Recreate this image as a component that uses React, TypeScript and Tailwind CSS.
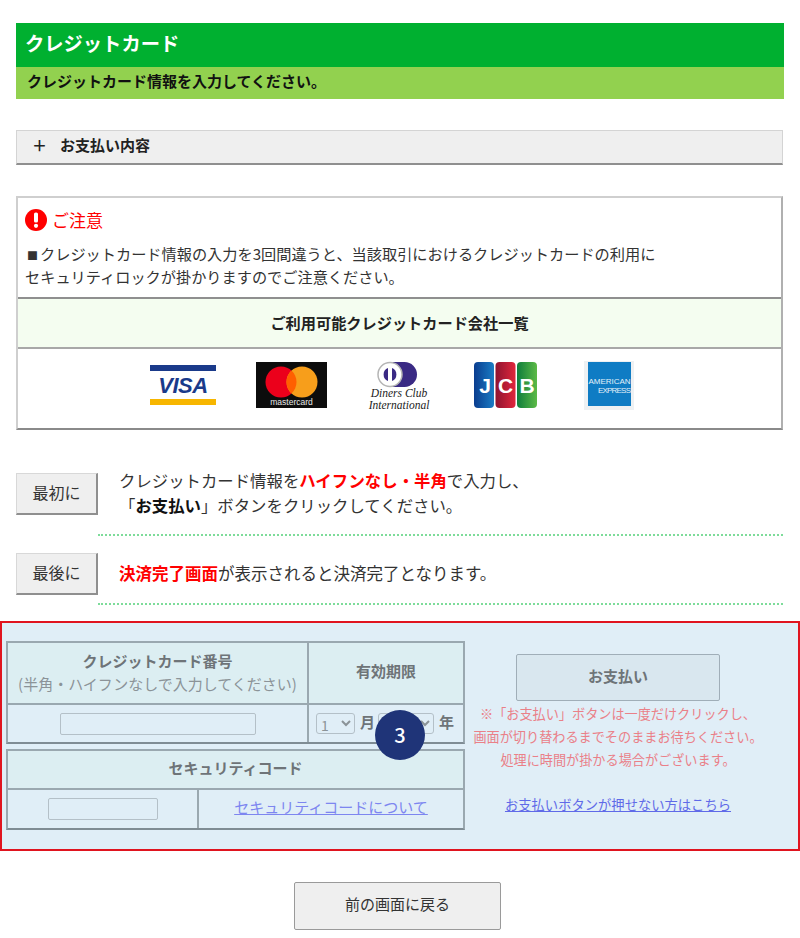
import React from 'react';

const VisaLogo = () => (
  <svg width="66" height="40" viewBox="0 0 66 40" className="ml-[132px]">
    <rect x="0" y="0" width="66" height="6" fill="#1a3a8a" />
    <rect x="0" y="34" width="66" height="6" fill="#f7b600" />
    <text x="33" y="28" textAnchor="middle" fontFamily="'Liberation Sans', sans-serif" fontSize="22" fontWeight="700" fontStyle="italic" fill="#1a3a8a" letterSpacing="-0.5">VISA</text>
  </svg>
);

const MastercardLogo = () => (
  <svg width="71" height="46" viewBox="0 0 71 46" className="ml-[40px]">
    <rect width="71" height="46" fill="#0c0c0c" />
    <circle cx="25" cy="20" r="15.5" fill="#eb001b" />
    <circle cx="46" cy="20" r="15.5" fill="#f79e1b" />
    <path d="M35.5 8.6a15.5 15.5 0 0 1 0 22.8a15.5 15.5 0 0 1 0-22.8z" fill="#ff5f00" />
    <text x="35.5" y="43" textAnchor="middle" fontFamily="'Liberation Sans', sans-serif" fontSize="8.5" fill="#e8e8e8">mastercard</text>
  </svg>
);

const DinersLogo = () => (
  <svg width="60" height="47" viewBox="0 0 60 47" className="ml-[43px] overflow-visible">
    <rect x="10" y="0" width="37" height="25" rx="12.5" fill="#3a2a84" />
    <circle cx="20" cy="12.5" r="12" fill="#ffffff" stroke="#b5b5b5" strokeWidth="1.5" />
    <path d="M18 6a7 7 0 0 0 0 13z" fill="#3a2a84" />
    <path d="M22 6a7 7 0 0 1 0 13z" fill="#3a2a84" />
    <text x="29" y="35" textAnchor="middle" fontFamily="'Liberation Serif', serif" fontSize="11.5" fontStyle="italic" fill="#222222">Diners Club</text>
    <text x="29" y="47" textAnchor="middle" fontFamily="'Liberation Serif', serif" fontSize="11.5" fontStyle="italic" fill="#222222">International</text>
  </svg>
);

const JcbLogo = () => (
  <svg width="63" height="46" viewBox="0 0 63 46" className="ml-[44px]">
    <defs>
      <linearGradient id="jb" x1="0" y1="0" x2="1" y2="0"><stop offset="0" stopColor="#0a3d8f" /><stop offset="1" stopColor="#1a7cc4" /></linearGradient>
      <linearGradient id="jr" x1="0" y1="0" x2="1" y2="0"><stop offset="0" stopColor="#8e1430" /><stop offset="1" stopColor="#e0263c" /></linearGradient>
      <linearGradient id="jg" x1="0" y1="0" x2="1" y2="0"><stop offset="0" stopColor="#0f7d3c" /><stop offset="1" stopColor="#5cba46" /></linearGradient>
    </defs>
    <rect x="0" y="0" width="20" height="46" rx="4" fill="url(#jb)" />
    <rect x="21.5" y="0" width="20" height="46" rx="4" fill="url(#jr)" />
    <rect x="43" y="0" width="20" height="46" rx="4" fill="url(#jg)" />
    <text x="11" y="31" textAnchor="middle" fontFamily="'Liberation Sans', sans-serif" fontSize="21" fontWeight="700" fill="#ffffff">J</text>
    <text x="31.5" y="31" textAnchor="middle" fontFamily="'Liberation Sans', sans-serif" fontSize="21" fontWeight="700" fill="#ffffff">C</text>
    <text x="53" y="31" textAnchor="middle" fontFamily="'Liberation Sans', sans-serif" fontSize="21" fontWeight="700" fill="#ffffff">B</text>
  </svg>
);

const AmexLogo = () => (
  <svg width="50" height="49" viewBox="0 0 50 49" className="ml-[47px]">
    <rect width="50" height="49" fill="#eef1f3" />
    <rect x="4" y="1" width="43" height="44" fill="#0f7cc4" />
    <text x="4.5" y="23" fontFamily="'Liberation Sans', sans-serif" fontSize="8" fill="#e4f0f8" textLength="42">AMERICAN</text>
    <text x="14" y="32" fontFamily="'Liberation Sans', sans-serif" fontSize="8" fill="#e4f0f8" textLength="33">EXPRESS</text>
  </svg>
);

const AlertIcon = () => (
  <svg width="22" height="22" viewBox="0 0 22 22">
    <circle cx="11" cy="11" r="11" fill="#ff0000" />
    <rect x="9" y="3.5" width="4" height="10" rx="1.6" fill="#ffffff" />
    <circle cx="11" cy="16.8" r="2.1" fill="#ffffff" />
  </svg>
);

const StepLabel = ({ children }: { children: React.ReactNode }) => (
  <div className="w-[82px] h-[42px] shrink-0 flex items-center justify-center pb-[4px] bg-[#efefef] border border-[#d8d8d8] border-r-2 border-b-2 border-r-[#8f8f8f] border-b-[#8f8f8f] text-[16px] text-[#333]">
    {children}
  </div>
);

export default function App() {
  return (
    <div className="w-[800px] h-[938px] bg-white overflow-hidden pt-[23px] font-['Noto_Sans_CJK_JP','Liberation_Sans',sans-serif] text-[#333]">
      {/* header */}
      <div className="mx-4 w-[768px]">
        <div className="h-[44px] bg-[#00b030] flex items-center pl-[9px] pb-[3px] text-[19.3px] font-bold text-white">クレジットカード</div>
        <div className="h-[32px] bg-[#92d14f] flex items-center pl-[11px] pb-[3px] text-[15px] font-bold text-[#111]">クレジットカード情報を入力してください。</div>
      </div>

      <div className="ml-4 w-[767px] h-[35px] mt-[31px] pb-[3px] bg-[#efefef] border border-[#d4d4d4] border-b-2 border-b-[#8f8f8f] flex items-center text-[15px] font-bold text-[#222]">
        <span className="ml-[15px] w-[28px]">＋</span>
        <span>お支払い内容</span>
      </div>

      {/* notice */}
      <div className="ml-4 w-[767px] h-[234px] mt-[31px] border-2 border-[#cfcfcf] border-b-[#8a8a8a] border-r-[#b0b0b0] flex flex-col">
        <div className="h-[99px] pl-[7px] pt-[11px]">
          <div className="flex items-center gap-[5px] h-[22px]">
            <AlertIcon />
            <span className="text-[17px] text-[#ff0000]">ご注意</span>
          </div>
          <p className="mt-[11px] text-[15.2px] leading-[23px] text-[#333]">
            <span className="text-[11px] leading-none mx-[2px]">■</span>クレジットカード情報の入力を3回間違うと、当該取引におけるクレジットカードの利用に
            <br />
            セキュリティロックが掛かりますのでご注意ください。
          </p>
        </div>
        <div className="h-[52px] pb-[1px] bg-[#f4fdf0] border-y-2 border-t-[#8f8f8f] border-b-[#a8a8a8] flex items-center justify-center text-[15.2px] font-bold text-[#222]">
          ご利用可能クレジットカード会社一覧
        </div>
        <div className="flex-1 flex items-center pb-[7px]">
          <VisaLogo />
          <MastercardLogo />
          <DinersLogo />
          <JcbLogo />
          <AmexLogo />
        </div>
      </div>

      {/* steps */}
      <div className="ml-4 w-[767px] mt-[43px]">
        <div className="flex gap-[21px]">
          <StepLabel>最初に</StepLabel>
          <p className="text-[16.4px] leading-[25px] -mt-[5px]">
            クレジットカード情報を<span className="font-bold text-[#ff0000]">ハイフンなし・半角</span>で入力し、
            <br />
            「<span className="font-bold text-[#111]">お支払い</span>」ボタンをクリックしてください。
          </p>
        </div>
        <div className="ml-[82px] mt-[16px] border-t-2 border-dotted border-[#7ddc9a]" />
        <div className="flex items-center gap-[21px] mt-[17px]">
          <StepLabel>最後に</StepLabel>
          <p className="text-[16.5px] pb-[2px]">
            <span className="font-bold text-[#ff0000]">決済完了画面</span>が表示されると決済完了となります。
          </p>
        </div>
        <div className="ml-[82px] mt-[8px] border-t-2 border-dotted border-[#7ddc9a]" />
      </div>

      {/* payment form */}
      <div className="relative mt-[16px] w-[800px] h-[230px] border-2 border-[#e0141f] bg-[#e0eef7] flex pl-[4px] pt-[18px]">
        <div className="w-[459px] shrink-0 text-[#6e7478]">
          <div className="w-[459px] h-[103px] border-2 border-[#9aa8b0] border-b-[#7f8c94] grid grid-cols-[301px_1fr] grid-rows-[62px_1fr]">
            <div className="bg-[#dceef2] border-r-2 border-b-2 border-[#9aa8b0] flex flex-col items-center justify-center pb-[3px] text-[15px] leading-[23px]">
              <span className="font-bold">クレジットカード番号</span>
              <span className="text-[#8b9398]">(半角・ハイフンなしで入力してください)</span>
            </div>
            <div className="bg-[#dceef2] border-b-2 border-[#9aa8b0] flex items-center justify-center pb-[3px] text-[15px] font-bold">有効期限</div>
            <div className="border-r-2 border-[#9aa8b0] flex items-center justify-center">
              <input className="w-[196px] h-[22px] border border-[#b4c0c8] rounded-[2px]" />
            </div>
            <div className="flex items-center pl-[7px] text-[15px] font-bold">
              <select className="w-[39px] h-[21px] border border-[#b4c0c8] rounded-[3px] text-[14px] font-normal text-[#8b9398]">
                <option>1</option>
              </select>
              <span className="ml-[5px] pb-[2px]">月</span>
              <select className="ml-[3px] w-[56px] h-[21px] border border-[#b4c0c8] rounded-[3px] text-[14px] font-normal text-[#8b9398]">
                <option>2024</option>
              </select>
              <span className="ml-[5px] pb-[2px]">年</span>
            </div>
          </div>
          <div className="mt-[5px] w-[459px] h-[81px] border-2 border-[#9aa8b0] border-b-[#7f8c94] grid grid-cols-[191px_1fr] grid-rows-[39px_1fr]">
            <div className="col-span-2 bg-[#dceef2] border-b-2 border-[#9aa8b0] flex items-center justify-center pb-[2px] text-[15px] font-bold">セキュリティコード</div>
            <div className="border-r-2 border-[#9aa8b0] flex items-center justify-center">
              <input className="w-[110px] h-[22px] border border-[#b4c0c8] rounded-[2px]" />
            </div>
            <div className="flex items-center justify-center pb-[3px]">
              <a className="text-[15px] text-[#7d86f0] underline">セキュリティコードについて</a>
            </div>
          </div>
        </div>

        <div className="flex-1 flex flex-col items-center pr-[2px]">
          <div className="mt-[13px] ml-[-25px] w-[204px] h-[47px] pb-[3px] bg-[#d9e7ef] border border-[#a0aeb8] rounded-[2px] flex items-center justify-center text-[15px] font-bold text-[#6e7478]">
            お支払い
          </div>
          <p className="mt-[1px] ml-[-25px] text-center text-[13.15px] leading-[23px] text-[#ea8088] whitespace-nowrap">
            ※「お支払い」ボタンは一度だけクリックし、
            <br />
            画面が切り替わるまでそのままお待ちください。
            <br />
            処理に時間が掛かる場合がございます。
          </p>
          <a className="mt-[24px] ml-[-25px] text-[13.3px] text-[#5f6ae8] underline whitespace-nowrap">お支払いボタンが押せない方はこちら</a>
        </div>

        <div className="absolute left-[373px] top-[87px] w-[50px] h-[50px] rounded-full bg-[#1f3478] flex items-center justify-center text-[20px] font-medium text-white">
          3
        </div>
      </div>

      <div className="mt-[31px] ml-[294px] w-[207px] h-[48px] pb-[3px] bg-[#efefef] border border-[#9a9a9a] rounded-[2px] flex items-center justify-center text-[15px] text-[#333]">
        前の画面に戻る
      </div>
    </div>
  );
}
